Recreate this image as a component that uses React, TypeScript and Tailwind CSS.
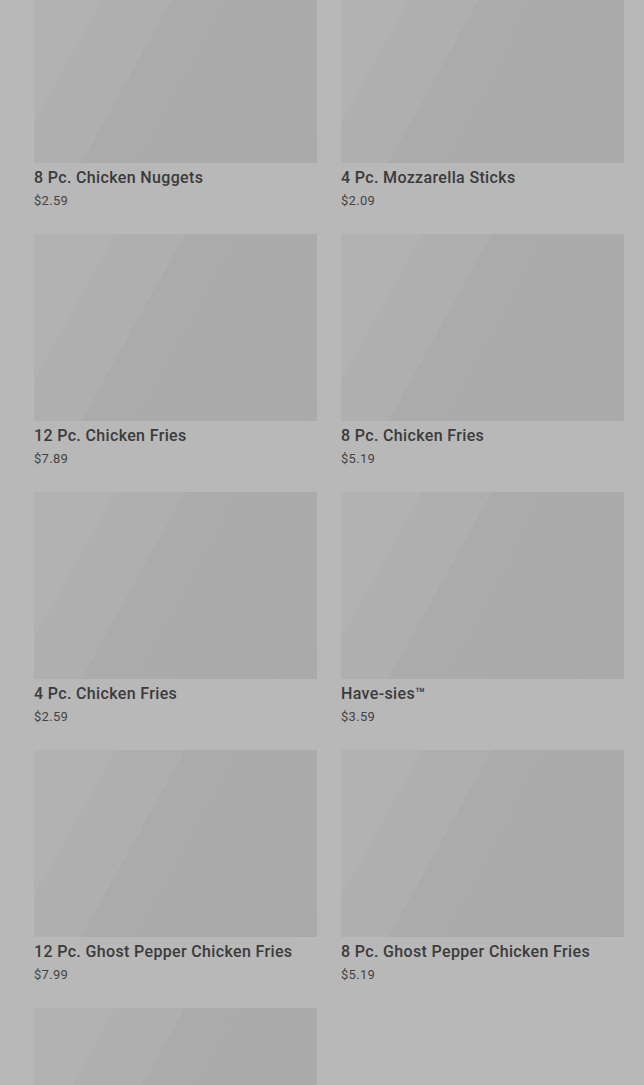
const items = [
  { name: "8 Pc. Chicken Nuggets", price: "$2.59" },
  { name: "4 Pc. Mozzarella Sticks", price: "$2.09" },
  { name: "12 Pc. Chicken Fries", price: "$7.89" },
  { name: "8 Pc. Chicken Fries", price: "$5.19" },
  { name: "4 Pc. Chicken Fries", price: "$2.59" },
  { name: "Have-sies™", price: "$3.59" },
  { name: "12 Pc. Ghost Pepper Chicken Fries", price: "$7.99" },
  { name: "8 Pc. Ghost Pepper Chicken Fries", price: "$5.19" },
  { name: "", price: "" },
];

const MenuCard = ({ name, price }: { name: string; price: string }) => (
  <div className="flex flex-col">
    {/* skeleton placeholder while image loads */}
    <div className="h-[187px] w-full bg-[linear-gradient(119deg,#b2b2b2_0%,#b2b2b2_21%,#afafaf_21%,#afafaf_39%,#ababab_39%,#aaaaaa_100%)]" />
    {name && (
      <>
        <p className="mt-[3px] text-[16px] leading-6 font-medium tracking-[0.35px] text-[#3b3b3b]">{name}</p>
        <p className="mt-[1px] text-[13px] leading-5 tracking-[0.3px] text-[#444]">{price}</p>
      </>
    )}
  </div>
);

export default function App() {
  return (
    <div
      className="h-[1085px] w-full overflow-hidden bg-[#b8b8b8]"
      style={{ fontFamily: "Roboto, 'Liberation Sans', sans-serif" }}
    >
      <div className="-mt-6 grid grid-cols-[283px_283px] gap-x-6 gap-y-[23px] pl-[34px] pr-5">
        {items.map((item, i) => (
          <MenuCard key={i} {...item} />
        ))}
      </div>
    </div>
  );
}
